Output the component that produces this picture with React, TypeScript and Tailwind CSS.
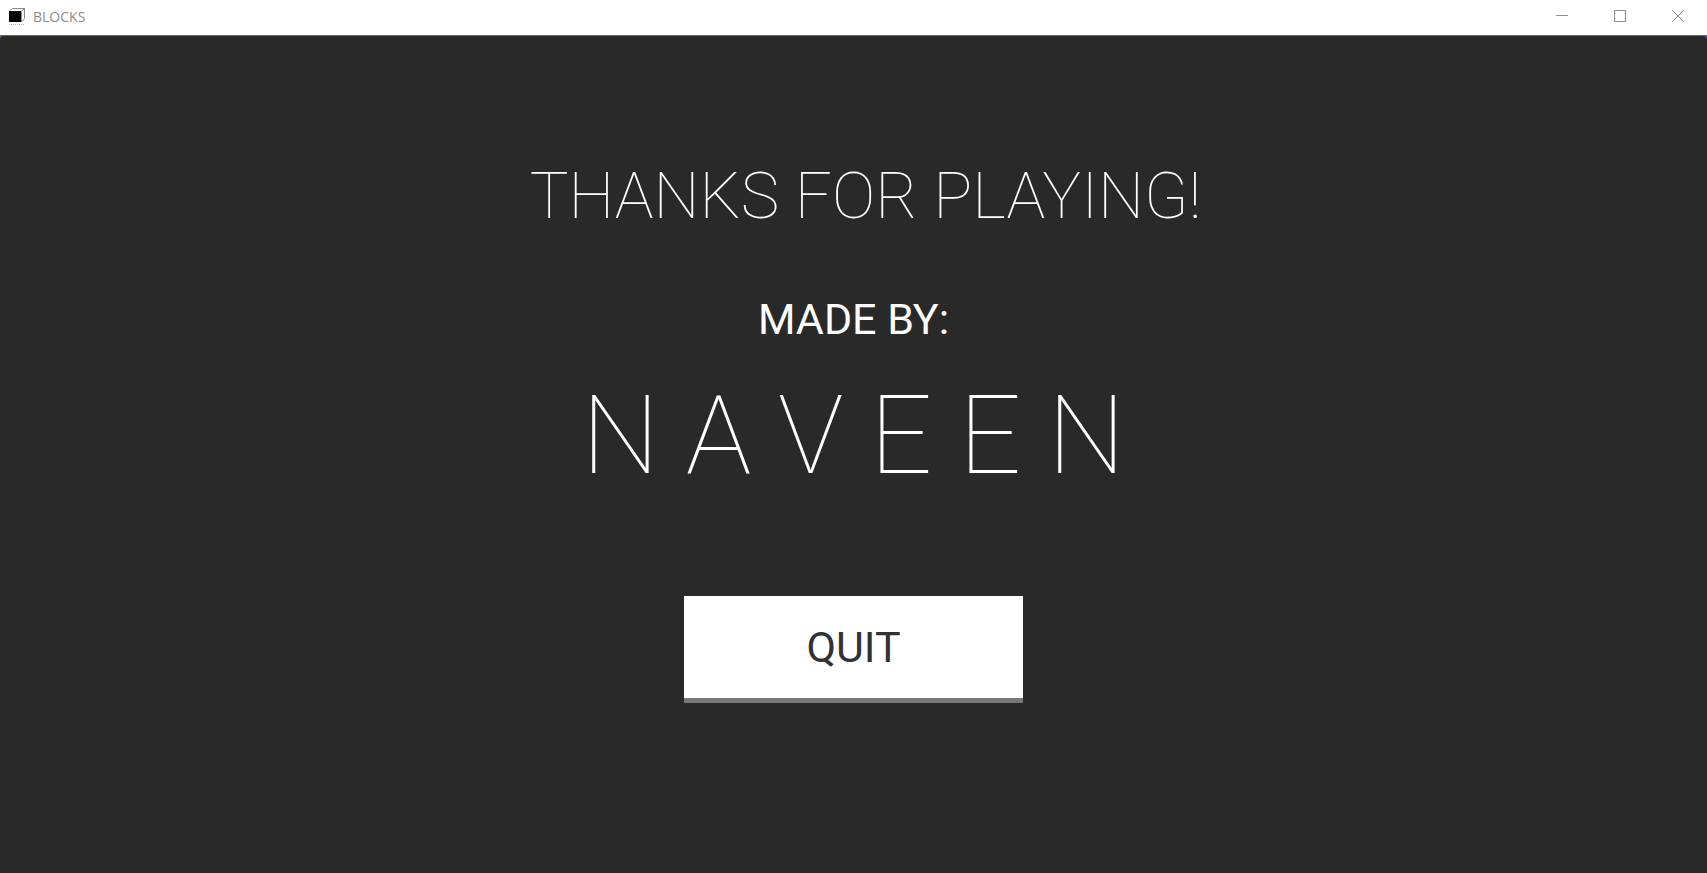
export default function App() {
  return (
    <div className="flex min-h-screen flex-col bg-white">
      <header className="flex h-[35px] items-stretch justify-between">
        <div className="flex items-center gap-2 pb-0.5 pl-2">
          <svg width="17" height="18" viewBox="0 0 17 18" aria-hidden="true">
            <path d="M1.500 3l3-2.500h12v10l-3 3.500V3.500l3-3" fill="none" stroke="#8a8a8a" />
            <rect x="1" y="3" width="12" height="11" fill="#000" />
            <path d="M1 16.500h15" stroke="#b5b5b5" strokeDasharray="1 1" />
          </svg>
          <h1 className="font-['Open_Sans',sans-serif] text-sm text-[#8c8c8c]">BLOCKS</h1>
        </div>
        <div className="flex text-[#8f8f8f]">
          <button type="button" aria-label="Minimize" className="flex w-[58px] items-center justify-center pb-[3px]">
            <svg width="12" height="12" viewBox="0 0 12 12" fill="none" stroke="currentColor" aria-hidden="true">
              <path d="M0 5.500h12" />
            </svg>
          </button>
          <button type="button" aria-label="Maximize" className="flex w-[58px] items-center justify-center pb-[3px]">
            <svg width="12" height="12" viewBox="0 0 12 12" fill="none" stroke="currentColor" aria-hidden="true">
              <path d="M.5 .5h11v11H.5z" />
            </svg>
          </button>
          <button type="button" aria-label="Close" className="flex w-[58px] items-center justify-center pb-[3px]">
            <svg width="12" height="12" viewBox="0 0 12 12" fill="none" stroke="currentColor" aria-hidden="true">
              <path d="M0 0l12 12M12 0L0 12" />
            </svg>
          </button>
        </div>
      </header>
      <div className="flex grow bg-[#4a6a9a] pt-px">
        <main className="flex grow flex-col items-center rounded-t bg-[#292929] pt-[116px] font-[Roboto,sans-serif] text-white">
          <h2 className="pl-6 text-[65px] leading-[88px] font-thin">THANKS FOR PLAYING!</h2>
          <p className="mt-[53px] text-[43px] leading-[52px]">MADE BY:</p>
          <p className="mt-[27px] text-[110px] leading-[128px] font-thin">N A V E E N</p>
          <button type="button" className="mt-24 h-[107px] w-[339px] border-b-[5px] border-[#777977] bg-white text-[43px] text-[#323232]">QUIT</button>
        </main>
      </div>
    </div>
  );
}
